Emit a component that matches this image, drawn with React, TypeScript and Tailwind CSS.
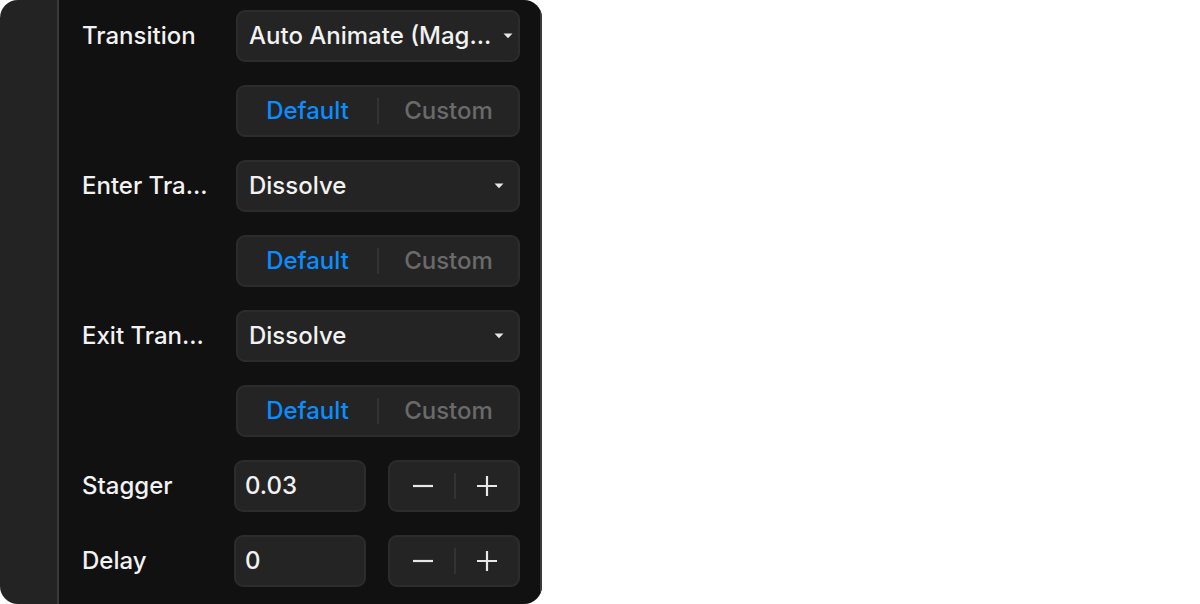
const font = { fontFamily: "Inter, 'Noto Sans', sans-serif" };

function Caret() {
  return (
    <svg width="10" height="6" viewBox="0 0 10 6" className="shrink-0">
      <path d="M0.5 0.5 H9.5 L5 5.2 Z" fill="#e6e6e6" />
    </svg>
  );
}

function Label({ children }: { children: string }) {
  return (
    <div className="w-[154px] shrink-0 whitespace-nowrap text-[24px] font-[450] text-[#f2f2f2]">
      {children}
    </div>
  );
}

function Select({ value }: { value: string }) {
  return (
    <div className="flex h-[52px] w-[284px] items-center gap-3 rounded-[9px] border-2 border-[#2c2c2c] bg-[#242424] pl-[11px] pr-[14px]">
      <span className="flex-1 whitespace-nowrap text-[24px] font-[450] text-[#f2f2f2]">{value}</span>
      <Caret />
    </div>
  );
}

function Segmented() {
  return (
    <div className="ml-[154px] flex h-[52px] w-[284px] items-center rounded-[9px] border-2 border-[#2c2c2c] bg-[#242424] text-[24px] font-[450]">
      <span className="flex-1 text-center text-[#0a8dff]">Default</span>
      <span className="h-[26px] w-[2px] bg-[#333333]" />
      <span className="flex-1 text-center text-[#6a6a6a]">Custom</span>
    </div>
  );
}

function MinusIcon() {
  return (
    <svg width="22" height="22" viewBox="0 0 22 22">
      <path d="M1 11 H21" stroke="#e8e8e8" strokeWidth="2.2" />
    </svg>
  );
}

function PlusIcon() {
  return (
    <svg width="22" height="22" viewBox="0 0 22 22">
      <path d="M1 11 H21 M11 1 V21" stroke="#e8e8e8" strokeWidth="2.2" />
    </svg>
  );
}

function NumberRow({ label, value }: { label: string; value: string }) {
  return (
    <div className="flex items-center">
      <div className="w-[152px] shrink-0 text-[24px] font-[450] text-[#f2f2f2]">{label}</div>
      <div className="flex h-[52px] w-[132px] items-center rounded-[9px] border-2 border-[#2c2c2c] bg-[#242424] pl-[9px] text-[24px] font-[450] text-[#f2f2f2]">
        {value}
      </div>
      <div className="ml-[22px] flex h-[52px] w-[132px] items-center rounded-[9px] border-2 border-[#2c2c2c] bg-[#242424]">
        <span className="flex flex-1 justify-center pl-[2px]">
          <MinusIcon />
        </span>
        <span className="h-[26px] w-[2px] bg-[#333333]" />
        <span className="flex flex-1 justify-center">
          <PlusIcon />
        </span>
      </div>
    </div>
  );
}

export default function App() {
  return (
    <div className="h-[604px] w-[1200px] bg-white" style={font}>
      <div className="flex h-[604px] w-[542px] overflow-hidden rounded-[18px]">
        <div className="w-[57px] shrink-0 bg-[#232323]" />
        <div className="w-[2px] shrink-0 bg-[#3a3a3a]" />
        <div className="flex flex-1 flex-col gap-[23px] border-r-2 border-[#3a3a3a] bg-[#111111] pl-[23px] pt-[10px]">
          <div className="flex items-center">
            <Label>Transition</Label>
            <Select value="Auto Animate (Mag..." />
          </div>
          <Segmented />
          <div className="flex items-center">
            <Label>Enter Tra...</Label>
            <Select value="Dissolve" />
          </div>
          <Segmented />
          <div className="flex items-center">
            <Label>Exit Tran...</Label>
            <Select value="Dissolve" />
          </div>
          <Segmented />
          <NumberRow label="Stagger" value="0.03" />
          <NumberRow label="Delay" value="0" />
        </div>
      </div>
    </div>
  );
}
